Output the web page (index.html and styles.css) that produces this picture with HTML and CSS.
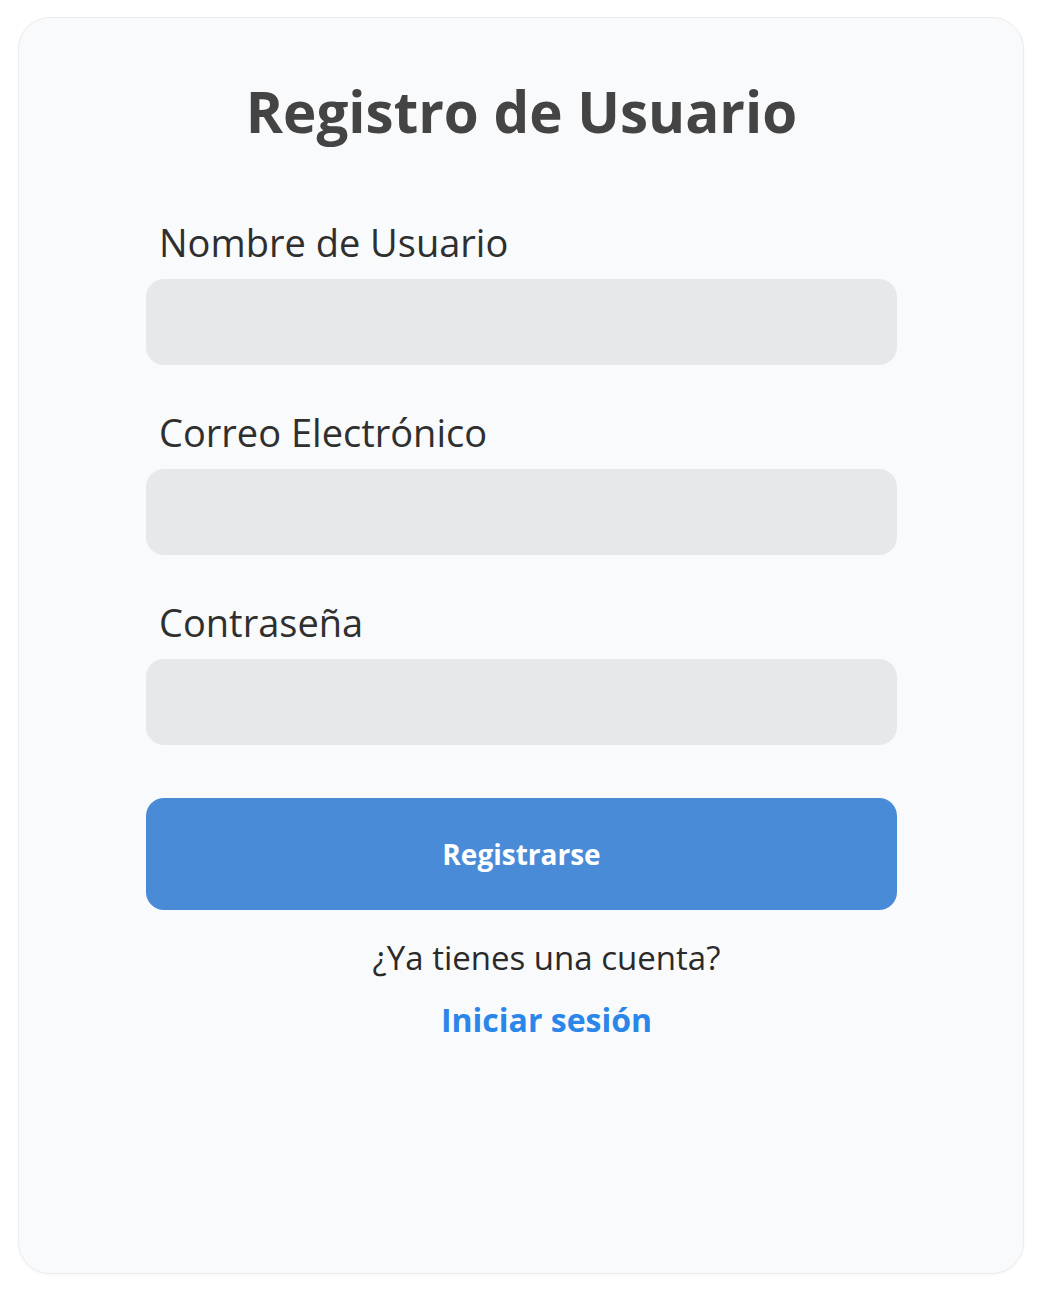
FILE: index.html
```html
<!DOCTYPE html>
<html lang="es">
<head>
<meta charset="utf-8">
<title>Registro de Usuario</title>
<link rel="stylesheet" href="styles.css">
</head>
<body>
<main class="card">
  <h1 class="title">Registro de Usuario</h1>
  <form class="form">
    <label class="label" for="u">Nombre de Usuario</label>
    <input class="input" id="u" type="text">
    <label class="label" for="e">Correo Electrónico</label>
    <input class="input" id="e" type="email">
    <label class="label" for="p">Contraseña</label>
    <input class="input" id="p" type="password">
    <button class="btn" type="button">Registrarse</button>
  </form>
  <div class="footer">
    <p class="question">¿Ya tienes una cuenta?</p>
    <a class="link" href="#">Iniciar sesión</a>
  </div>
</main>
</body>
</html>
```

FILE: styles.css
```css
html, body {
  margin: 0;
  padding: 0;
  background: #ffffff;
}
body {
  padding: 17px 20px 34px 18px;
  font-family: "Open Sans", "Noto Sans", sans-serif;
}
.card {
  box-sizing: border-box;
  width: 1006px;
  height: 1257px;
  border: 1px solid #ececec;
  border-radius: 32px;
  background: #f9fafb;
  box-shadow: 0 1px 3px rgba(0,0,0,0.04);
  padding: 60px 126px 0 127px;
  display: flex;
  flex-direction: column;
}
.title {
  margin: 0;
  font-size: 56.5px;
  line-height: 67px;
  font-weight: 700;
  color: #444444;
  text-align: center;
}
.form {
  display: flex;
  flex-direction: column;
  margin-top: 74px;
}
.label {
  font-size: 38px;
  line-height: 46px;
  color: #2f2f2f;
  padding-left: 13px;
  margin-bottom: 14px;
}
.input {
  box-sizing: border-box;
  height: 86px;
  border: none;
  border-radius: 18px;
  background: #e7e8e9;
  margin-bottom: 44px;
}
.btn {
  height: 112px;
  margin-top: 9px;
  border: none;
  border-radius: 18px;
  background: #4a8bd8;
  color: #ffffff;
  font-family: "Open Sans", "Noto Sans", sans-serif;
  font-size: 28px;
  font-weight: 700;
}
.footer {
  display: flex;
  flex-direction: column;
  align-items: center;
  padding-left: 50px;
  margin-top: 28px;
}
.question {
  margin: 0;
  font-size: 33px;
  line-height: 40px;
  color: #2a2a2a;
}
.link {
  margin-top: 22px;
  font-size: 32px;
  line-height: 40px;
  font-weight: 700;
  color: #2b86ea;
  text-decoration: none;
}
```
